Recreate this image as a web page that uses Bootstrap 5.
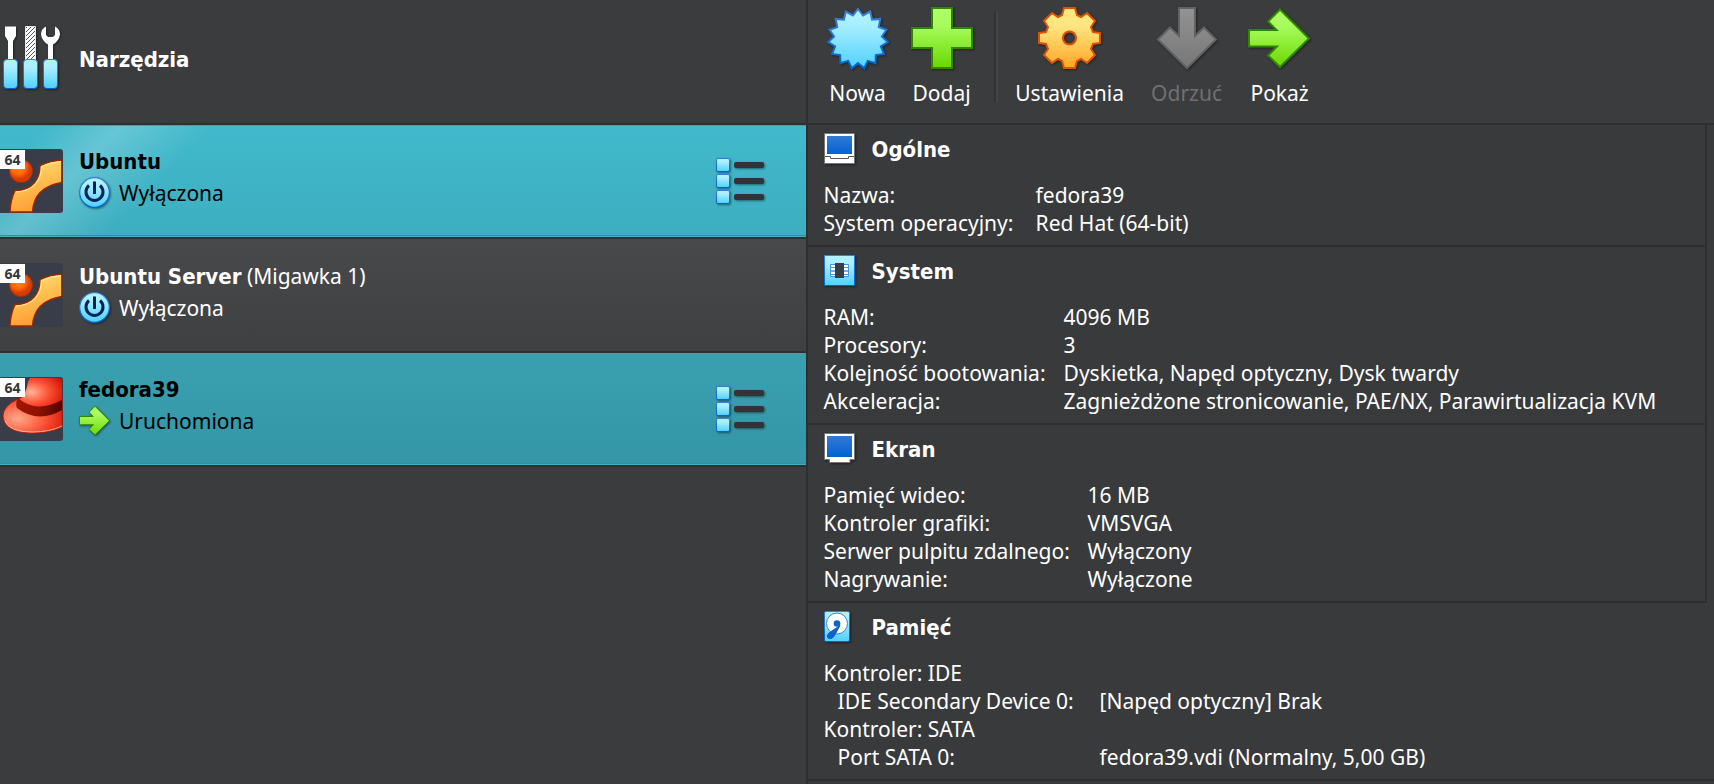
<!DOCTYPE html>
<html lang="pl">
<head>
<meta charset="utf-8">
<meta name="viewport" content="width=device-width, initial-scale=1">
<title>Menedżer maszyn wirtualnych</title>
<link rel="stylesheet" href="https://cdn.jsdelivr.net/npm/bootstrap@5.3.0/dist/css/bootstrap.min.css">
<style>
:root{--line:#2e2f30}
body{background:#3b3c3e;color:#fff;font-family:"Noto Sans",Tahoma,sans-serif;font-size:21px;line-height:28px}
button{font:inherit;color:inherit}
svg{display:block;flex:none}
.ico{filter:drop-shadow(1px 1px 1px rgba(0,0,0,.45))}
.machines{width:calc(47% + 2px);border-right:2px solid var(--line)}
.entry{border:0;border-bottom:2px solid var(--line);height:114px;gap:16px;padding:0 41px 0 0;color:#fff;background:transparent;text-align:left}
.entry.tools{height:125px;padding-bottom:8px}
.entry.tools strong{padding-top:4px}
.entry strong,.sect h2{font-family:"DejaVu Sans Condensed","DejaVu Sans",sans-serif;font-stretch:condensed;font-weight:700;font-size:22px}
.entry.plain{background:linear-gradient(#48494b,#3f4042)}
.entry.picked,.entry.running{color:#000;box-shadow:inset 0 1px #66949b,inset 0 -1px #3eb0c1,inset 0 -2px #338f9d}
.entry.picked{background:linear-gradient(135deg,transparent 34px,rgba(255,255,255,.1) 60px,rgba(255,255,255,.2) 86px,rgba(255,255,255,.14) 105px,transparent 152px),linear-gradient(#41b9cc,#3daec0)}
.entry.running{background:linear-gradient(#3aa0b0,#3496a6)}
.caption-box{line-height:32px;padding-bottom:8px}
.state{height:30px}
.bits{left:0;top:1px;width:25px;height:19px;background:#fff;color:#33363f;font:700 14px/19px "Noto Sans",sans-serif;text-align:center}
.toolbar{height:125px;border-bottom:2px solid var(--line);padding:7px 0 0 8px}
.tool{border:0;background:none;padding:0;width:84px}
.tool.wide{width:132px}
.tool.mid{width:102px}
.tool:disabled{color:#6f7072}
.tool span{margin-top:8px}
.sep{width:4px;height:90px;margin:5px 6px 0 10px;background:linear-gradient(90deg,#323334 50%,#454648 50%)}
.details{background:#393a3b}
.upper{border-right:2px solid var(--line);margin-right:7px}
.sect{border-bottom:2px solid var(--line);padding:8px 16px}
.sect header{height:48px}
.sect h2{line-height:32px;margin:0;padding-top:1px}
.pic{width:48px}
.sect table{table-layout:fixed;width:100%}
.sect th,.sect td{padding:0;font-weight:400;white-space:nowrap}
.key-s{width:212px}
.key-m{width:240px}
.key-l{width:264px}
.key-xl{width:276px}
.sect th.sub{padding-left:14px}
</style>
</head>
<body>
<svg width="0" height="0" class="position-absolute" aria-hidden="true">
<defs>
<linearGradient id="blue" x2="0" y2="1"><stop stop-color="#b4f3ff"/><stop offset=".3" stop-color="#a5eeff"/><stop offset="1" stop-color="#4fd0ff"/></linearGradient>
<linearGradient id="edge" x2="0" y2="1"><stop stop-color="#3a7fd5"/><stop offset="1" stop-color="#0064cf"/></linearGradient>
<linearGradient id="green" x2="0" y2="1"><stop stop-color="#b0ff66"/><stop offset=".3" stop-color="#a8fb5c"/><stop offset="1" stop-color="#69d800"/></linearGradient>
<linearGradient id="gold" x2="0" y2="1"><stop stop-color="#ffe780"/><stop offset=".3" stop-color="#ffe680"/><stop offset="1" stop-color="#ffa524"/></linearGradient>
<linearGradient id="grey" x2="0" y2="1"><stop stop-color="#929392"/><stop offset="1" stop-color="#767776"/></linearGradient>
<linearGradient id="screen" x2="0" y2="1"><stop stop-color="#3478d4"/><stop offset="1" stop-color="#0064d4"/></linearGradient>
<radialGradient id="ball" cx=".4" cy=".35"><stop stop-color="#ff8c1a"/><stop offset=".6" stop-color="#ff6a0a"/><stop offset="1" stop-color="#d83a00"/></radialGradient>
<linearGradient id="ring" x2=".3" y2="1"><stop stop-color="#ffe685"/><stop offset=".45" stop-color="#ffc456"/><stop offset="1" stop-color="#ff9f35"/></linearGradient>
<radialGradient id="hat" cx=".3" cy=".5" r=".8"><stop stop-color="#ffb49a"/><stop offset=".45" stop-color="#ff5a3c"/><stop offset="1" stop-color="#d80f00"/></radialGradient>
<radialGradient id="brim" cx=".25" cy=".6" r=".85"><stop stop-color="#ffa888"/><stop offset=".5" stop-color="#fb5a40"/><stop offset="1" stop-color="#dd1500"/></radialGradient>
<linearGradient id="band"><stop stop-color="#a01800"/><stop offset=".5" stop-color="#8c1200"/><stop offset="1" stop-color="#500400"/></linearGradient>
<pattern id="hatch" width="4" height="4" patternUnits="userSpaceOnUse"><rect width="4" height="4" fill="#fff"/><path d="M-1 1l2-2M0 4l4-4M3 5l2-2" stroke="#555" stroke-width="1"/></pattern>
<symbol id="ubuntu" viewBox="0 0 63 64"><rect x="-3" width="66" height="64" rx="3" fill="#393d49"/><circle cx="21" cy="22" r="11.5" fill="url(#ball)" stroke="#a82c00" stroke-width=".8"/><path d="M62 11Q49 12 40 16.500Q40 27 34.500 33.500Q28 41.500 15 41.500Q10.500 51 10 63H32.500Q34 38 62 33.500Z" fill="url(#ring)" stroke="#9d2600" stroke-width="1.400"/><path d="M61 12.500Q50 13.500 41.500 17.500Q41.500 28 35.500 35Q28 42.700 16 43" fill="none" stroke="#fff0a0" stroke-width="1"/><path d="M62 10v24" stroke="#393d49" stroke-width="1"/></symbol>
<symbol id="redhat" viewBox="0 0 63 64"><rect x="-3" width="66" height="64" rx="3" fill="#393d49"/><path d="M18 22Q3 29 3 39C4 52 17 56 32 56Q50 56 62 50V20H22Z" fill="url(#brim)" stroke="#b81a08"/><path d="M18 24Q26 19 28 5L30 1H58L62 2V24Q42 35 18 24Z" fill="url(#hat)"/><path d="M18 21Q36 37 62 23V33Q38 47 17 31Q15 26 18 21Z" fill="url(#band)"/><path d="M5 44Q10 55 32 55Q50 55 62 49" fill="none" stroke="#ffb090" stroke-width="1"/></symbol>
<symbol id="power" viewBox="0 0 32 32"><circle cx="15.500" cy="15.500" r="14.800" fill="url(#blue)" stroke="url(#edge)" stroke-width="1.200"/><path d="M10 8.500a8.500 8.500 0 1 0 11 0M15.500 4.500v12.500" fill="none" stroke="#00235c" stroke-width="3"/></symbol>
<symbol id="list" viewBox="0 0 50 48"><g fill="url(#blue)" stroke="url(#edge)"><rect x="1.500" y="1.500" width="13" height="13" rx="1.500"/><rect x="1.500" y="17.500" width="13" height="13" rx="1.500"/><rect x="1.500" y="33.500" width="13" height="13" rx="1.500"/></g><g fill="#313335"><rect x="19" y="5" width="30" height="6" rx="2"/><rect x="19" y="21" width="30" height="6" rx="2"/><rect x="19" y="37" width="30" height="6" rx="2"/></g></symbol>
<symbol id="go" viewBox="0 0 64 64"><path d="M1 23H28.500L20 14.500 32 2.500 61 31.500 32 60 20 48.500 29 39.500H1Z" fill="url(#green)" stroke="#2f8700" stroke-width="2"/></symbol>
</defs>
</svg>
<div class="d-flex min-vh-100">
<nav class="machines d-flex flex-column flex-shrink-0" aria-label="Maszyny">
<button type="button" class="entry tools d-flex align-items-center">
<svg class="ico" width="63" height="64" viewBox="0 0 63 64"><path d="M5 .5H16V10L13 15V34H8V15L5 10Z" fill="#fff"/><path d="M25.500.5h10V34h-10z" fill="url(#hatch)" stroke="#e8e8e8"/><path d="M46 .5Q41 3 41 8.500Q42 15 48 18.500V34H53V18.500Q59 15 60 8.500Q60 3 55 .5V9L53 11H48L46 9Z" fill="#fff"/><g fill="url(#blue)" stroke="url(#edge)"><rect x="3.500" y="33.500" width="14" height="29" rx="3.500"/><rect x="23.500" y="33.500" width="14" height="29" rx="3.500"/><rect x="43.500" y="33.500" width="14" height="29" rx="3.500"/></g></svg>
<strong>Narzędzia</strong></button>
<button type="button" class="entry picked d-flex align-items-center">
<span class="position-relative"><svg width="63" height="64"><use href="#ubuntu"/></svg><span class="bits position-absolute">64</span></span>
<span class="caption-box flex-grow-1"><strong class="d-block">Ubuntu</strong><span class="state d-flex align-items-center gap-2"><svg class="ico" width="32" height="32"><use href="#power"/></svg>Wyłączona</span></span>
<svg class="ico" width="50" height="48"><use href="#list"/></svg></button>
<button type="button" class="entry plain d-flex align-items-center">
<span class="position-relative"><svg width="63" height="64"><use href="#ubuntu"/></svg><span class="bits position-absolute">64</span></span>
<span class="caption-box flex-grow-1"><span class="d-block"><strong>Ubuntu Server</strong> (Migawka 1)</span><span class="state d-flex align-items-center gap-2"><svg class="ico" width="32" height="32"><use href="#power"/></svg>Wyłączona</span></span></button>
<button type="button" class="entry running d-flex align-items-center">
<span class="position-relative"><svg width="63" height="64"><use href="#redhat"/></svg><span class="bits position-absolute">64</span></span>
<span class="caption-box flex-grow-1"><strong class="d-block">fedora39</strong><span class="state d-flex align-items-center gap-2"><svg class="ico" width="32" height="32"><use href="#go"/></svg>Uruchomiona</span></span>
<svg class="ico" width="50" height="48"><use href="#list"/></svg></button>
</nav>
<main class="flex-grow-1 d-flex flex-column">
<div class="toolbar d-flex align-items-start" role="toolbar">
<button type="button" class="tool d-flex flex-column align-items-center"><svg class="ico" width="64" height="64"><path d="M32 2 37 8.500 44.200 4.600 46.100 12.600 54.300 11.900 52.800 20 60.500 22.700 55.900 29.500 61.800 35.100 54.800 39.400 58 47 49.800 48.100 49.600 56.300 41.800 53.900 38.200 61.300 32 56 25.800 61.300 22.200 53.900 14.400 56.300 14.200 48.100 6 47 9.200 39.400 2.200 35.100 8.100 29.500 3.500 22.700 11.200 20 9.700 11.900 17.900 12.600 19.800 4.600 27 8.500Z" fill="url(#blue)" stroke="url(#edge)" stroke-width="2"/></svg><span>Nowa</span></button>
<button type="button" class="tool d-flex flex-column align-items-center"><svg class="ico" width="64" height="64"><path d="M22 1h20v20h20v20H42v20H22V41H2V21h20z" fill="url(#green)" stroke="#2f8700" stroke-width="2"/></svg><span>Dodaj</span></button>
<span class="sep"></span>
<button type="button" class="tool wide d-flex flex-column align-items-center"><svg class="ico" width="64" height="64"><path fill-rule="evenodd" d="M26 1H37L39 8 43 10 49 6 57 14 53 20 55 25 62 26V36L55 37 53 42 57 48 49 56 43 52 39 54 37 61H26L24 54 20 52 14 56 6 48 10 42 8 37 1 36V26L8 25 10 20 6 14 14 6 20 10 24 8ZM31.500 24.500a6.500 6.500 0 1 0 .01 0Z" fill="url(#gold)" stroke="#dc5208" stroke-width="2"/></svg><span>Ustawienia</span></button>
<button type="button" class="tool mid d-flex flex-column align-items-center" disabled><svg class="ico" width="64" height="64"><path d="M24 1H40V29L49 20.500 61 32.500 32 61 3 32.500 15 20.500 24 29Z" fill="url(#grey)" stroke="#626362" stroke-width="2"/></svg><span>Odrzuć</span></button>
<button type="button" class="tool d-flex flex-column align-items-center"><svg class="ico" width="64" height="64"><use href="#go"/></svg><span>Pokaż</span></button>
</div>
<div class="details flex-grow-1">
<div class="upper">
<section class="sect"><header class="d-flex align-items-start"><div class="pic"><svg class="ico" width="32" height="32"><path d="M.5.5h30v30H.5z" fill="#fff" stroke="#77777b"/><path d="M3 3h25v18H3z" fill="url(#screen)"/><path d="M1 23.500H6.500V25.500H24.500V23.500H30" fill="none" stroke="#55565a"/></svg></div><h2>Ogólne</h2></header>
<table><colgroup><col class="key-s"><col></colgroup><tbody><tr><th scope="row">Nazwa:</th><td>fedora39</td></tr><tr><th scope="row">System operacyjny:</th><td>Red Hat (64-bit)</td></tr></tbody></table></section>
<section class="sect"><header class="d-flex align-items-start"><div class="pic"><svg class="ico" width="32" height="32"><path d="M.5.5h30v30H.5z" fill="url(#blue)" stroke="url(#edge)"/><path d="M6.500 9.500h18v3h-18zM6.500 12.500h18v3.500h-18zM6.500 16h18v3.500h-18zM6.500 19.500h18v2h-18z" fill="#fff" stroke="#4a92d4"/><path d="M11 8h9v15h-9z" fill="#393d49"/></svg></div><h2>System</h2></header>
<table><colgroup><col class="key-m"><col></colgroup><tbody><tr><th scope="row">RAM:</th><td>4096 MB</td></tr><tr><th scope="row">Procesory:</th><td>3</td></tr><tr><th scope="row">Kolejność bootowania:</th><td>Dyskietka, Napęd optyczny, Dysk twardy</td></tr><tr><th scope="row">Akceleracja:</th><td>Zagnieżdżone stronicowanie, PAE/NX, Parawirtualizacja KVM</td></tr></tbody></table></section>
<section class="sect"><header class="d-flex align-items-start"><div class="pic"><svg class="ico" width="32" height="32"><path d="M.5.5h30v26H26v3H5.500v-3H.5z" fill="#fff" stroke="#77777b"/><path d="M3 3h25v21H3z" fill="url(#screen)"/></svg></div><h2>Ekran</h2></header>
<table><colgroup><col class="key-l"><col></colgroup><tbody><tr><th scope="row">Pamięć wideo:</th><td>16 MB</td></tr><tr><th scope="row">Kontroler grafiki:</th><td>VMSVGA</td></tr><tr><th scope="row">Serwer pulpitu zdalnego:</th><td>Wyłączony</td></tr><tr><th scope="row">Nagrywanie:</th><td>Wyłączone</td></tr></tbody></table></section>
</div>
<section class="sect"><header class="d-flex align-items-start"><div class="pic"><svg class="ico" width="32" height="32"><rect x=".5" y=".5" width="25" height="30" rx="1.500" fill="url(#blue)" stroke="url(#edge)"/><circle cx="13" cy="12.500" r="10.500" fill="#fff" stroke="#3a86d4"/><circle cx="13" cy="12.500" r="3.300" fill="#0d62cc"/><path d="M16 14.500 5 22Q2 24.500 4 27Q7 29 10 25.500Z" fill="#0d62cc" stroke="#0d62cc"/></svg></div><h2>Pamięć</h2></header>
<table><colgroup><col class="key-xl"><col></colgroup><tbody><tr><th scope="row" colspan="2">Kontroler: IDE</th></tr><tr><th scope="row" class="sub">IDE Secondary Device 0:</th><td>[Napęd optyczny] Brak</td></tr><tr><th scope="row" colspan="2">Kontroler: SATA</th></tr><tr><th scope="row" class="sub">Port SATA 0:</th><td>fedora39.vdi (Normalny, 5,00 GB)</td></tr></tbody></table></section>
</div>
</main>
</div>
<script src="https://cdn.jsdelivr.net/npm/bootstrap@5.3.0/dist/js/bootstrap.bundle.min.js"></script>
</body>
</html>
